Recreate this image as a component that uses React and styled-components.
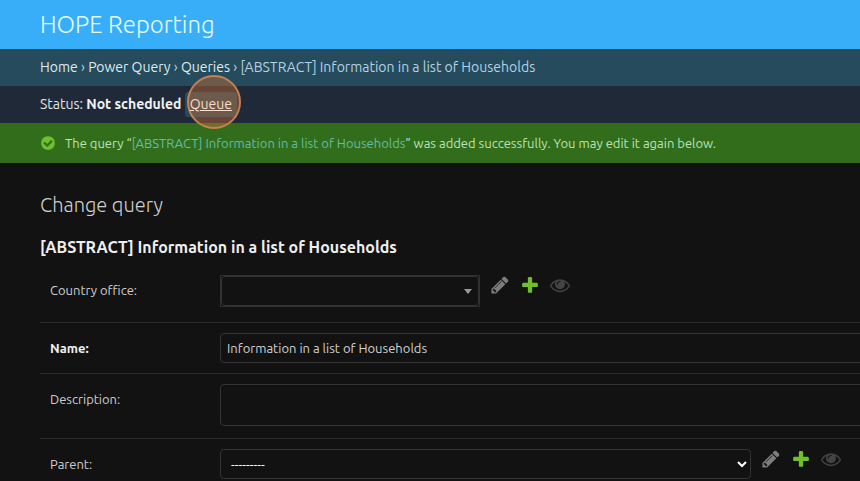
import React from "react";
import styled, { createGlobalStyle } from "styled-components";

const GlobalStyle = createGlobalStyle`
  *, *::before, *::after { box-sizing: border-box; }
  html, body { margin: 0; background: #121212; overflow: hidden; }
  body {
    font-family: Ubuntu, "Noto Sans", "Open Sans", sans-serif;
    font-size: 13px;
    color: #dcdcdc;
  }
`;

const Page = styled.div`
  width: 100%;
  height: 481px;
  overflow: hidden;
  display: flex;
  flex-direction: column;
`;

const Header = styled.header`
  flex: none;
  height: 49px;
  padding: 0 40px;
  background: #38aef8;
`;

const SiteName = styled.h1`
  margin: 0;
  font-size: 24px;
  font-weight: 300;
  line-height: 49px;
  color: #e4fbff;
`;

const Breadcrumbs = styled.nav`
  flex: none;
  height: 37px;
  padding: 0 40px;
  background: #264b5d;
  color: #b4d3e2;
  font-size: 14px;
  line-height: 36px;
  white-space: pre;
`;

const Crumb = styled.a`
  color: #dfebf0;
`;

const StatusBar = styled.div`
  flex: none;
  height: 37px;
  padding: 0 40px;
  background: #1f2937;
  color: #e2e5e8;
  font-size: 14px;
  line-height: 36px;
  white-space: nowrap;
`;

const StatusValue = styled.strong`
  font-weight: 700;
  color: #f3f3f3;
`;

const QueueButton = styled.a`
  position: relative;
  display: inline-block;
  padding: 0 5px;
  height: 25px;
  line-height: 25px;
  border-radius: 3px;
  background: #264b5d;
  color: #f8dccb;
  text-decoration: underline;
`;

const ClickMarker = styled.span`
  position: absolute;
  left: 2px;
  top: -17px;
  width: 54px;
  height: 54px;
  border: 2px solid #c58153;
  border-radius: 50%;
  background: rgba(216, 112, 52, 0.4);
`;

const QueueLabel = styled.span`
  position: relative;
  z-index: 1;
`;

const Message = styled.div`
  flex: none;
  display: flex;
  align-items: center;
  gap: 9px;
  height: 40px;
  padding: 0 40px;
  background: #326d1c;
  color: #bce3b5;
  white-space: nowrap;
`;

const MessageText = styled.span`
  padding-bottom: 1px;
`;

const MessageLink = styled.a`
  color: #62bda3;
`;

const Content = styled.main`
  padding: 29px 0 0 40px;
`;

const PageTitle = styled.h2`
  margin: 0;
  font-size: 20px;
  font-weight: 300;
  line-height: 26px;
  color: #cfcfcf;
`;

const ObjectTitle = styled.h3`
  margin: 17px 0 0;
  font-size: 16px;
  font-weight: 700;
  line-height: 24px;
  color: #eeeeee;
`;

const FormRow = styled.div`
  display: flex;
  align-items: flex-start;
  height: ${(p) => p.$height}px;
  padding: ${(p) => p.$top || 10}px 0 0 10px;
  border-bottom: 1px solid #2b2b2b;
`;

const Label = styled.label`
  flex: none;
  width: 170px;
  line-height: 30px;
  font-weight: ${(p) => (p.$required ? 700 : 400)};
  color: ${(p) => (p.$required ? "#eeeeee" : "#cecece")};
`;

const Field = styled.div`
  flex: none;
  width: ${(p) => p.$width || 660}px;
  height: ${(p) => p.$height || 30}px;
  padding: 0 6px;
  border: 1px solid #343434;
  border-radius: 4px;
  line-height: 28px;
  color: #d3d3d3;
`;

const SelectField = styled(Field)`
  display: flex;
  align-items: center;
  justify-content: space-between;
  padding: 0 3px 0 10px;
  color: #ffffff;
`;

const Select2Frame = styled.div`
  flex: none;
  width: 260px;
  height: 32px;
  border: 1px solid #303030;
`;

const Select2Box = styled.div`
  display: flex;
  align-items: center;
  justify-content: flex-end;
  width: 100%;
  height: 100%;
  padding-right: 6px;
  border: 1px solid #343434;
  border-radius: 4px;
`;

const Caret = styled.span`
  border: solid transparent;
  border-width: 5px 4px 0;
  border-top-color: #999999;
`;

const Actions = styled.div`
  display: flex;
  gap: 10px;
  margin-left: 10px;
`;

const Svg = styled.svg`
  display: block;
  flex: none;
`;

const PATHS = {
  edit: "M491 1536l91-91-235-235-91 91v107h128v128h107zm523-928q0-22-22-22-10 0-17 7l-542 542q-7 7-7 17 0 22 22 22 10 0 17-7l542-542q7-7 7-17zm-54-192l416 416-832 832H128v-416zm683 96q0 53-37 90l-166 166-416-416 166-165q36-38 90-38 53 0 91 38l235 234q37 39 37 91z",
  add: "M1600 796v192q0 40-28 68t-68 28h-416v416q0 40-28 68t-68 28H800q-40 0-68-28t-28-68v-416H288q-40 0-68-28t-28-68V796q0-40 28-68t68-28h416V284q0-40 28-68t68-28h192q40 0 68 28t28 68v416h416q40 0 68 28t28 68z",
  view: "M1664 960q-152-236-381-353 61 104 61 225 0 185-131.5 316.5t-316.5 131.5-316.5-131.5-131.5-316.5q0-121 61-225-229 117-381 353 133 205 333.5 326.5t434.5 121.5 434.5-121.5 333.5-326.5zm-720-384q0-20-14-34t-34-14q-125 0-214.5 89.5t-89.5 214.5q0 20 14 34t34 14 34-14 14-34q0-86 61-147t147-61q20 0 34-14t14-34zm848 384q0 34-20 69-140 230-376.5 368.5t-499.5 138.5-499.5-139-376.5-368q-20-35-20-69t20-69q140-229 376.5-368t499.5-139 499.5 139 376.5 368q20 35 20 69z",
  check: "M1412 734q0-28-18-46l-91-90q-19-19-45-19t-45 19l-408 407-226-226q-19-19-45-19t-45 19l-91 90q-18 18-18 46 0 27 18 45l362 362q19 19 45 19 27 0 46-19l543-543q18-18 18-45zm252 162q0 209-103 385.5t-279.5 279.5-385.5 103-385.5-103-279.5-279.5-103-385.5 103-385.5 279.5-279.5 385.5-103 385.5 103 279.5 279.5 103 385.5z",
};

const Icon = ({ name, color, size = 20 }) => (
  <Svg width={size} height={size} viewBox="0 0 1792 1792" fill={color}>
    <path d={PATHS[name]} />
  </Svg>
);

const RelatedActions = () => (
  <Actions>
    <Icon name="edit" color="#7d7d7d" />
    <Icon name="add" color="#70bf2b" />
    <Icon name="view" color="#434343" />
  </Actions>
);

export default function App() {
  return (
    <Page>
      <GlobalStyle />
      <Header>
        <SiteName>HOPE Reporting</SiteName>
      </Header>
      <Breadcrumbs>
        <Crumb>Home</Crumb> › <Crumb>Power Query</Crumb> › <Crumb>Queries</Crumb>
        {" › "}[ABSTRACT] Information in a list of Households
      </Breadcrumbs>
      <StatusBar>
        Status: <StatusValue>Not scheduled</StatusValue>{" "}
        <QueueButton>
          <ClickMarker />
          <QueueLabel>Queue</QueueLabel>
        </QueueButton>
      </StatusBar>
      <Message>
        <Icon name="check" color="#70bf2b" size={16} />
        <MessageText>
          The query “<MessageLink>[ABSTRACT] Information in a list of Households</MessageLink>” was
          added successfully. You may edit it again below.
        </MessageText>
      </Message>
      <Content>
        <PageTitle>Change query</PageTitle>
        <ObjectTitle>[ABSTRACT] Information in a list of Households</ObjectTitle>
        <FormRow $height={64} $top={16}>
          <Label>Country office:</Label>
          <Select2Frame>
            <Select2Box>
              <Caret />
            </Select2Box>
          </Select2Frame>
          <RelatedActions />
        </FormRow>
        <FormRow $height={51}>
          <Label $required>Name:</Label>
          <Field>Information in a list of Households</Field>
        </FormRow>
        <FormRow $height={65}>
          <Label>Description:</Label>
          <Field $height={42} />
        </FormRow>
        <FormRow $height={60}>
          <Label>Parent:</Label>
          <SelectField $width={531}>
            ---------
            <Svg width="10" height="8" viewBox="0 0 10 8" fill="none" stroke="#fff" strokeWidth="2">
              <path d="M1 2l4 4 4-4" />
            </Svg>
          </SelectField>
          <RelatedActions />
        </FormRow>
      </Content>
    </Page>
  );
}
